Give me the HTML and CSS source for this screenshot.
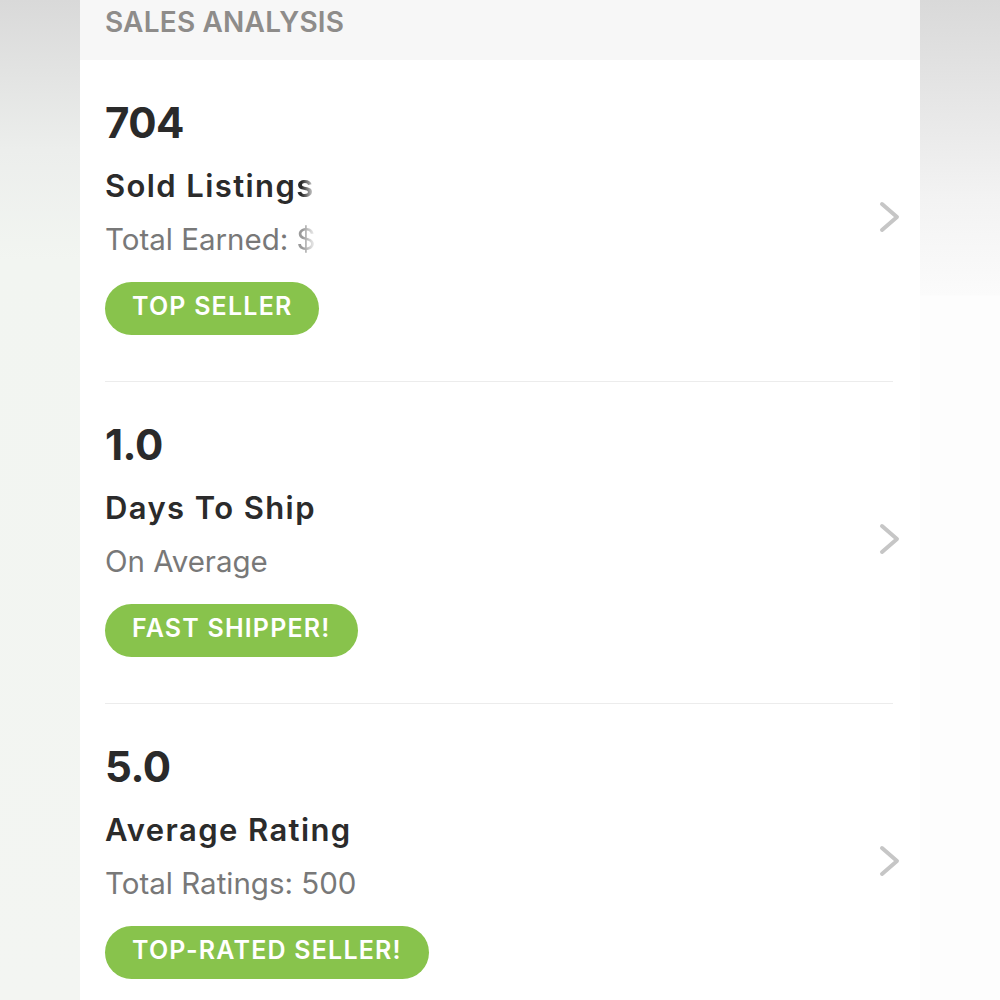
FILE: index.html
```html
<!DOCTYPE html>
<html lang="en">
<head>
<meta charset="utf-8">
<title>Sales Analysis</title>
<link rel="stylesheet" href="styles.css">
</head>
<body>
<main class="card">
  <header class="card-head">SALES ANALYSIS</header>
  <ul class="stats">
    <li class="stat">
      <div class="stat-body">
        <div class="stat-value">704</div>
        <div class="stat-title">Sold Listing<span class="fade">s</span></div>
        <div class="stat-sub">Total Earned: <span class="fade fade-light">$</span></div>
        <span class="pill">TOP SELLER</span>
      </div>
      <svg class="chev" viewBox="0 0 22 32" width="22" height="32"><polyline points="3,3 18,16 3,29"/></svg>
    </li>
    <li class="stat">
      <div class="stat-body">
        <div class="stat-value">1.0</div>
        <div class="stat-title">Days To Ship</div>
        <div class="stat-sub">On Average</div>
        <span class="pill">FAST SHIPPER!</span>
      </div>
      <svg class="chev" viewBox="0 0 22 32" width="22" height="32"><polyline points="3,3 18,16 3,29"/></svg>
    </li>
    <li class="stat">
      <div class="stat-body">
        <div class="stat-value">5.0</div>
        <div class="stat-title">Average Rating</div>
        <div class="stat-sub">Total Ratings: 500</div>
        <span class="pill">TOP-RATED SELLER!</span>
      </div>
      <svg class="chev" viewBox="0 0 22 32" width="22" height="32"><polyline points="3,3 18,16 3,29"/></svg>
    </li>
  </ul>
</main>
</body>
</html>
```
FILE: styles.css
```css
* { box-sizing: border-box; }

html, body {
  margin: 0;
  padding: 0;
  height: 100%;
}

body {
  font-family: "Inter", "Liberation Sans", sans-serif;
  background:
    linear-gradient(to bottom, #d9d9d9 0, #eceeec 150px, #f2f5f1 260px, #f3f5f2 100%) left top / 80px 100% no-repeat,
    linear-gradient(to bottom, #d9d9d9 0, #f3f3f3 200px, #fbfbfb 295px, #fdfdfd 296px, #fdfdfd 100%) right top / 80px 100% no-repeat,
    #ffffff;
  overflow: hidden;
}

.card {
  width: 840px;
  margin: 0 auto;
  background: #ffffff;
  min-height: 100%;
}

.card-head {
  height: 60px;
  background: #f7f7f7;
  padding: 0 25px;
  line-height: 44px;
  font-size: 28px;
  font-weight: 600;
  letter-spacing: 0.2px;
  color: #8e8c8a;
}

.stats {
  list-style: none;
  margin: 0;
  padding: 0;
}

.stat {
  display: flex;
  align-items: center;
  justify-content: space-between;
  margin: 0 27px 0 25px;
  padding: 38px 0 46px;
  border-bottom: 1px solid #ececec;
}

.stat-body {
  display: flex;
  flex-direction: column;
  align-items: flex-start;
}

.stat-value {
  font-size: 42px;
  line-height: 50px;
  font-weight: 700;
  color: #2a2a2a;
  letter-spacing: -0.5px;
}

.stat-title {
  margin-top: 18px;
  font-size: 31px;
  line-height: 40px;
  font-weight: 600;
  letter-spacing: 1.4px;
  color: #2b2b2b;
}

.stat-sub {
  margin-top: 13px;
  font-size: 29.5px;
  line-height: 40px;
  font-weight: 400;
  color: #787878;
}

.fade {
  background: linear-gradient(to right, #2b2b2b 30%, #d0d0d0 90%);
  -webkit-background-clip: text;
  background-clip: text;
  color: transparent;
}

.fade-light {
  background: linear-gradient(to right, #9a9a9a 30%, #e0e0e0 80%);
  -webkit-background-clip: text;
  background-clip: text;
}

.pill {
  margin-top: 23px;
  height: 53px;
  padding: 0 27px 5px;
  line-height: 48px;
  border-radius: 27px;
  background: #88c34c;
  color: #ffffff;
  font-size: 25px;
  font-weight: 600;
  letter-spacing: 1.2px;
  white-space: nowrap;
}

.chev {
  flex: none;
  margin-right: -8px;
  fill: none;
  stroke: #c6c6c6;
  stroke-width: 4;
  stroke-linecap: round;
  stroke-linejoin: round;
}
```
